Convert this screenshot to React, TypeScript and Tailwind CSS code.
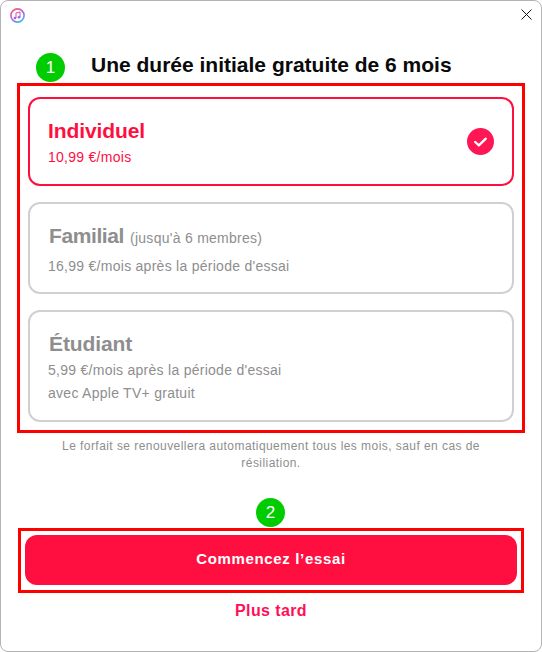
const sans = "font-['Liberation_Sans',Arial,sans-serif]";

function Badge({ n, className }: { n: number; className: string }) {
  return (
    <div
      className={`absolute flex h-[29px] w-[29px] items-center justify-center rounded-full bg-[#00cc00] text-[17px] text-white ${className}`}
    >
      {n}
    </div>
  );
}

function MusicIcon() {
  return (
    <svg width="15" height="15" viewBox="0 0 15 15">
      <defs>
        <linearGradient id="ring" x1="0.2" y1="0" x2="0.8" y2="1">
          <stop offset="0" stopColor="#fb5c74" />
          <stop offset="0.5" stopColor="#b060f0" />
          <stop offset="1" stopColor="#30c0f8" />
        </linearGradient>
      </defs>
      <circle cx="7.5" cy="7.5" r="6.6" fill="#fff" stroke="url(#ring)" strokeWidth="1.6" />
      <path d="M6 10V5l4-1v5" fill="none" stroke="#d050b0" strokeWidth="1" />
      <circle cx="5" cy="10" r="1.3" fill="#a060e0" />
      <circle cx="9" cy="9.3" r="1.3" fill="#a060e0" />
    </svg>
  );
}

export default function App() {
  return (
    <div
      className={`${sans} relative flex h-[652px] w-[542px] flex-col overflow-hidden rounded-lg border border-[#b4b4b4] bg-white`}
    >
      <div className="flex h-[52px] items-start justify-between pl-[9px] pr-[9px] pt-[7px]">
        <MusicIcon />
        <svg width="11" height="11" viewBox="0 0 11 11" className="mt-[1px]">
          <path d="M.5.5l10 10M10.5.5l-10 10" stroke="#111" strokeWidth="1" fill="none" />
        </svg>
      </div>

      <Badge n={1} className="left-[35px] top-[52px]" />
      <h1 className="pl-[90px] text-[21px] font-bold leading-[24px] text-[#0a0a0a]">
        Une durée initiale gratuite de 6 mois
      </h1>

      <div className="mx-[16px] mt-[6px] flex h-[350px] flex-col gap-[16px] border-[3px] border-[#ff0000] px-[8px] pt-[11px]">
        <div className="flex h-[89px] items-center justify-between rounded-[12px] border-2 border-[#ff0f3f] pl-[18px] pr-[18px]">
          <div className="pt-[2px] text-[#ff0f3f]">
            <div className="text-[21px] font-bold leading-[24px] tracking-[-0.1px]">Individuel</div>
            <div className="mt-[5px] text-[14px] leading-[18px] tracking-[0.27px]">10,99 €/mois</div>
          </div>
          <svg width="27" height="27" viewBox="0 0 28 28">
            <circle cx="14" cy="14" r="14" fill="#ff1654" />
            <path d="M8.5 14.5l3.8 3.6 7.2-7" fill="none" stroke="#fff" strokeWidth="2.4" strokeLinecap="round" strokeLinejoin="round" />
          </svg>
        </div>

        <div className="flex h-[92px] flex-col justify-center rounded-[12px] border-2 border-[#d0d0d4] pl-[18px] pt-[2px] text-[#8e8e8e]">
          <div className="leading-[24px]">
            <span className="ml-[1px] text-[21px] font-bold tracking-[-0.4px]">Familial</span>
            <span className="ml-[6px] text-[14px] tracking-[0.27px]">(jusqu'à 6 membres)</span>
          </div>
          <div className="mt-[7px] text-[14px] leading-[18px] tracking-[0.27px]">16,99 €/mois après la période d'essai</div>
        </div>

        <div className="flex h-[112px] flex-col justify-center rounded-[12px] border-2 border-[#d0d0d4] pl-[18px] pt-[1px] text-[#8e8e8e]">
          <div className="ml-[1px] text-[21px] font-bold leading-[24px] tracking-[-0.1px]">Étudiant</div>
          <div className="mt-[5px] text-[14px] leading-[18px] tracking-[0.27px]">5,99 €/mois après la période d'essai</div>
          <div className="mt-[5px] text-[14px] leading-[18px] tracking-[0.27px]">avec Apple TV+ gratuit</div>
        </div>
      </div>

      <p className="mx-auto mt-[5px] w-[440px] text-center text-[12px] leading-[17px] tracking-[0.44px] text-[#8e8e8e]">
        Le forfait se renouvellera automatiquement tous les mois, sauf en cas de résiliation.
      </p>

      <Badge n={2} className="left-[255px] top-[497px]" />
      <div className="mx-[17px] mt-[56px] flex h-[65px] items-start border-[3px] border-[#ff0000] px-[4px] pt-[4px]">
        <button className="h-[50px] w-full rounded-[12px] bg-[#ff0f3f] pb-[2px] text-[15px] font-bold tracking-[0.65px] text-white">
          Commencez l’essai
        </button>
      </div>

      <div className="mt-[6px] text-center text-[16px] font-bold tracking-[0.4px] text-[#ff0f58]">Plus tard</div>
    </div>
  );
}
